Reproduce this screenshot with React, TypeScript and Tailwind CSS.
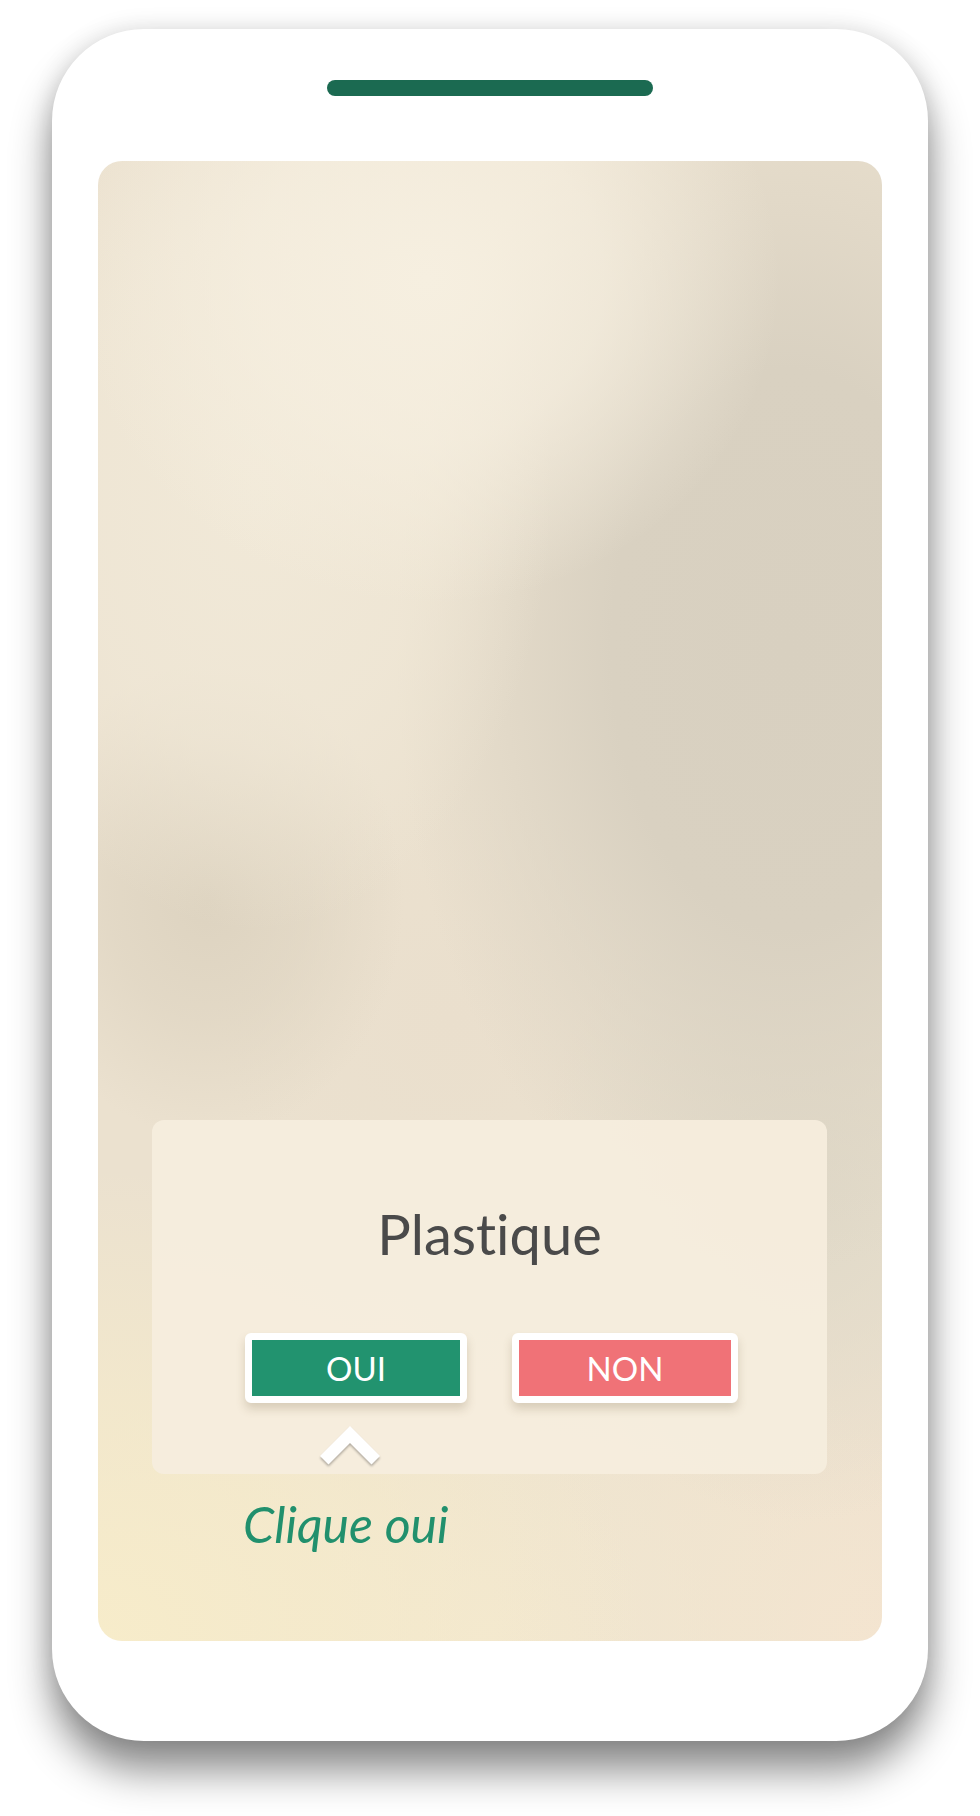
import React from "react";

function Chevron() {
  return (
    <svg
      width="62"
      height="42"
      viewBox="0 0 62 42"
      className="block drop-shadow-[0_2px_1px_rgba(0,0,0,0.28)]"
    >
      <polygon
        points="30,1 60,31 51.5,39.5 30,18 8.5,39.5 0,31"
        fill="#ffffff"
      />
    </svg>
  );
}

export default function App() {
  return (
    <div className="w-full h-[1816px] bg-white pt-[29px] font-['Lato',sans-serif] [font-variant-ligatures:none]">
      <div className="mx-auto w-[876px] h-[1712px] rounded-[92px] bg-white pt-[51px] shadow-[0_30px_40px_rgba(0,0,0,0.45),0_0_25px_rgba(0,0,0,0.12)]">
        <div className="mx-auto w-[326px] h-4 rounded-full bg-[#1b6a51]" />
        <div className="mt-[65px] mx-[46px] h-[1480px] rounded-[24px] overflow-hidden flex flex-col bg-[#ebe1cf] bg-[image:radial-gradient(ellipse_45%_22%_at_42%_8%,#f6efe0_0%,rgba(246,239,224,0.7)_50%,rgba(246,239,224,0)_100%),radial-gradient(ellipse_38%_30%_at_20%_22%,#f1e9d8_0%,rgba(241,233,216,0.6)_60%,rgba(241,233,216,0)_100%),radial-gradient(ellipse_50%_42%_at_88%_33%,#d8d0c0_0%,#d9d1c1_45%,rgba(217,209,193,0)_100%),radial-gradient(ellipse_25%_16%_at_14%_50%,#ddd3c0_0%,rgba(221,211,192,0.6)_50%,rgba(221,211,192,0)_100%),radial-gradient(ellipse_30%_16%_at_45%_58%,#eadfcd_0%,rgba(234,223,205,0)_100%),radial-gradient(ellipse_35%_22%_at_90%_70%,#e0d9c8_0%,rgba(224,217,200,0)_100%),radial-gradient(ellipse_70%_32%_at_0%_100%,#f7ecca_0%,rgba(247,236,202,0.6)_50%,rgba(247,236,202,0)_100%),radial-gradient(ellipse_60%_25%_at_50%_100%,#f2e7d0_0%,rgba(242,231,208,0)_100%),radial-gradient(ellipse_45%_25%_at_98%_100%,#f4e4d0_0%,rgba(244,228,208,0)_100%)]">
          <div className="mt-[959px] mx-[54px] mr-[55px] h-[354px] rounded-[12px] bg-[#f5eddd]/95 flex flex-col">
            <div className="mt-[86px] text-center text-[56px] leading-none text-[#4a4a4a]">
              Plastique
            </div>
            <div className="mt-[71px] flex justify-center gap-[45px] pl-[4px]">
              <button className="w-[222px] h-[70px] rounded-[6px] border-[7px] border-white bg-[#22936f] text-white text-[33px] leading-none flex items-center justify-center shadow-[0_6px_10px_rgba(110,90,60,0.22)]">
                OUI
              </button>
              <button className="w-[226px] h-[70px] rounded-[6px] border-[7px] border-white bg-[#f07277] text-white text-[33px] leading-none flex items-center justify-center shadow-[0_6px_10px_rgba(110,90,60,0.22)]">
                NON
              </button>
            </div>
            <div className="mt-[22px] ml-[168px]">
              <Chevron />
            </div>
          </div>
          <div className="mt-[25px] ml-[145px] text-[50px] leading-none italic text-[#21906d]">
            Clique oui
          </div>
        </div>
      </div>
    </div>
  );
}
